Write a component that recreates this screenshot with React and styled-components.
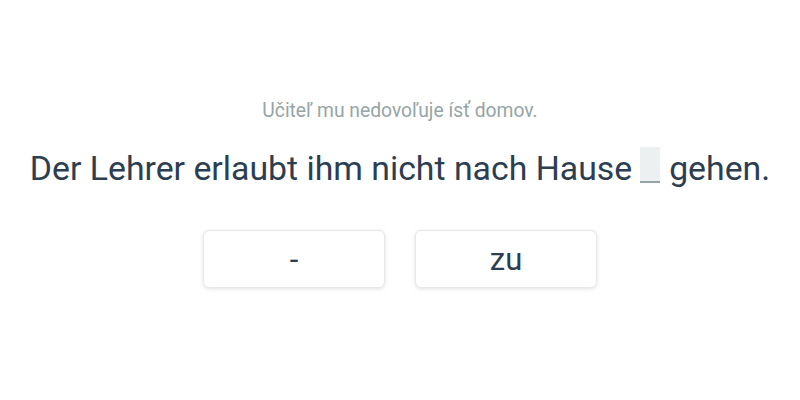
import React from 'react';
import styled, { createGlobalStyle } from 'styled-components';

const GlobalStyle = createGlobalStyle`
  html, body {
    margin: 0;
    padding: 0;
    background: #ffffff;
    font-family: Roboto, "Liberation Sans", sans-serif;
  }
`;

const Page = styled.div`
  width: 800px;
  height: 400px;
  display: flex;
  flex-direction: column;
  align-items: center;
  padding-top: 99px;
  box-sizing: border-box;
`;

const Hint = styled.div`
  font-size: 19.3px;
  line-height: 24px;
  color: #95a5a6;
`;

const Sentence = styled.div`
  margin-top: 26px;
  font-size: 33.8px;
  line-height: 40px;
  color: #2c3e50;
  display: flex;
  align-items: center;
  white-space: pre;
`;

const Blank = styled.span`
  display: inline-block;
  width: 20px;
  height: 36px;
  margin: 0 9px 0 8px;
  background: #ecf0f1;
  border-bottom: 2px solid #95a5a6;
  box-sizing: border-box;
  transform: translateY(-4px);
`;

const Options = styled.div`
  margin-top: 41px;
  display: flex;
  gap: 30px;
`;

const Option = styled.button`
  width: 182px;
  height: 58px;
  border: 1px solid #e6e9ea;
  border-radius: 6px;
  background: #ffffff;
  box-shadow: 0 1px 4px rgba(0, 0, 0, 0.12);
  font-family: Roboto, "Liberation Sans", sans-serif;
  font-size: 31px;
  color: #2c3e50;
  cursor: pointer;
  padding: 0;
`;

const options = ['-', 'zu'];

const App = () => (
  <>
    <GlobalStyle />
    <Page>
      <Hint>Učiteľ mu nedovoľuje ísť domov.</Hint>
      <Sentence>
        Der Lehrer erlaubt ihm nicht nach Hause
        <Blank />
        gehen.
      </Sentence>
      <Options>
        {options.map(option => (
          <Option key={option}>{option}</Option>
        ))}
      </Options>
    </Page>
  </>
);

export default App;
